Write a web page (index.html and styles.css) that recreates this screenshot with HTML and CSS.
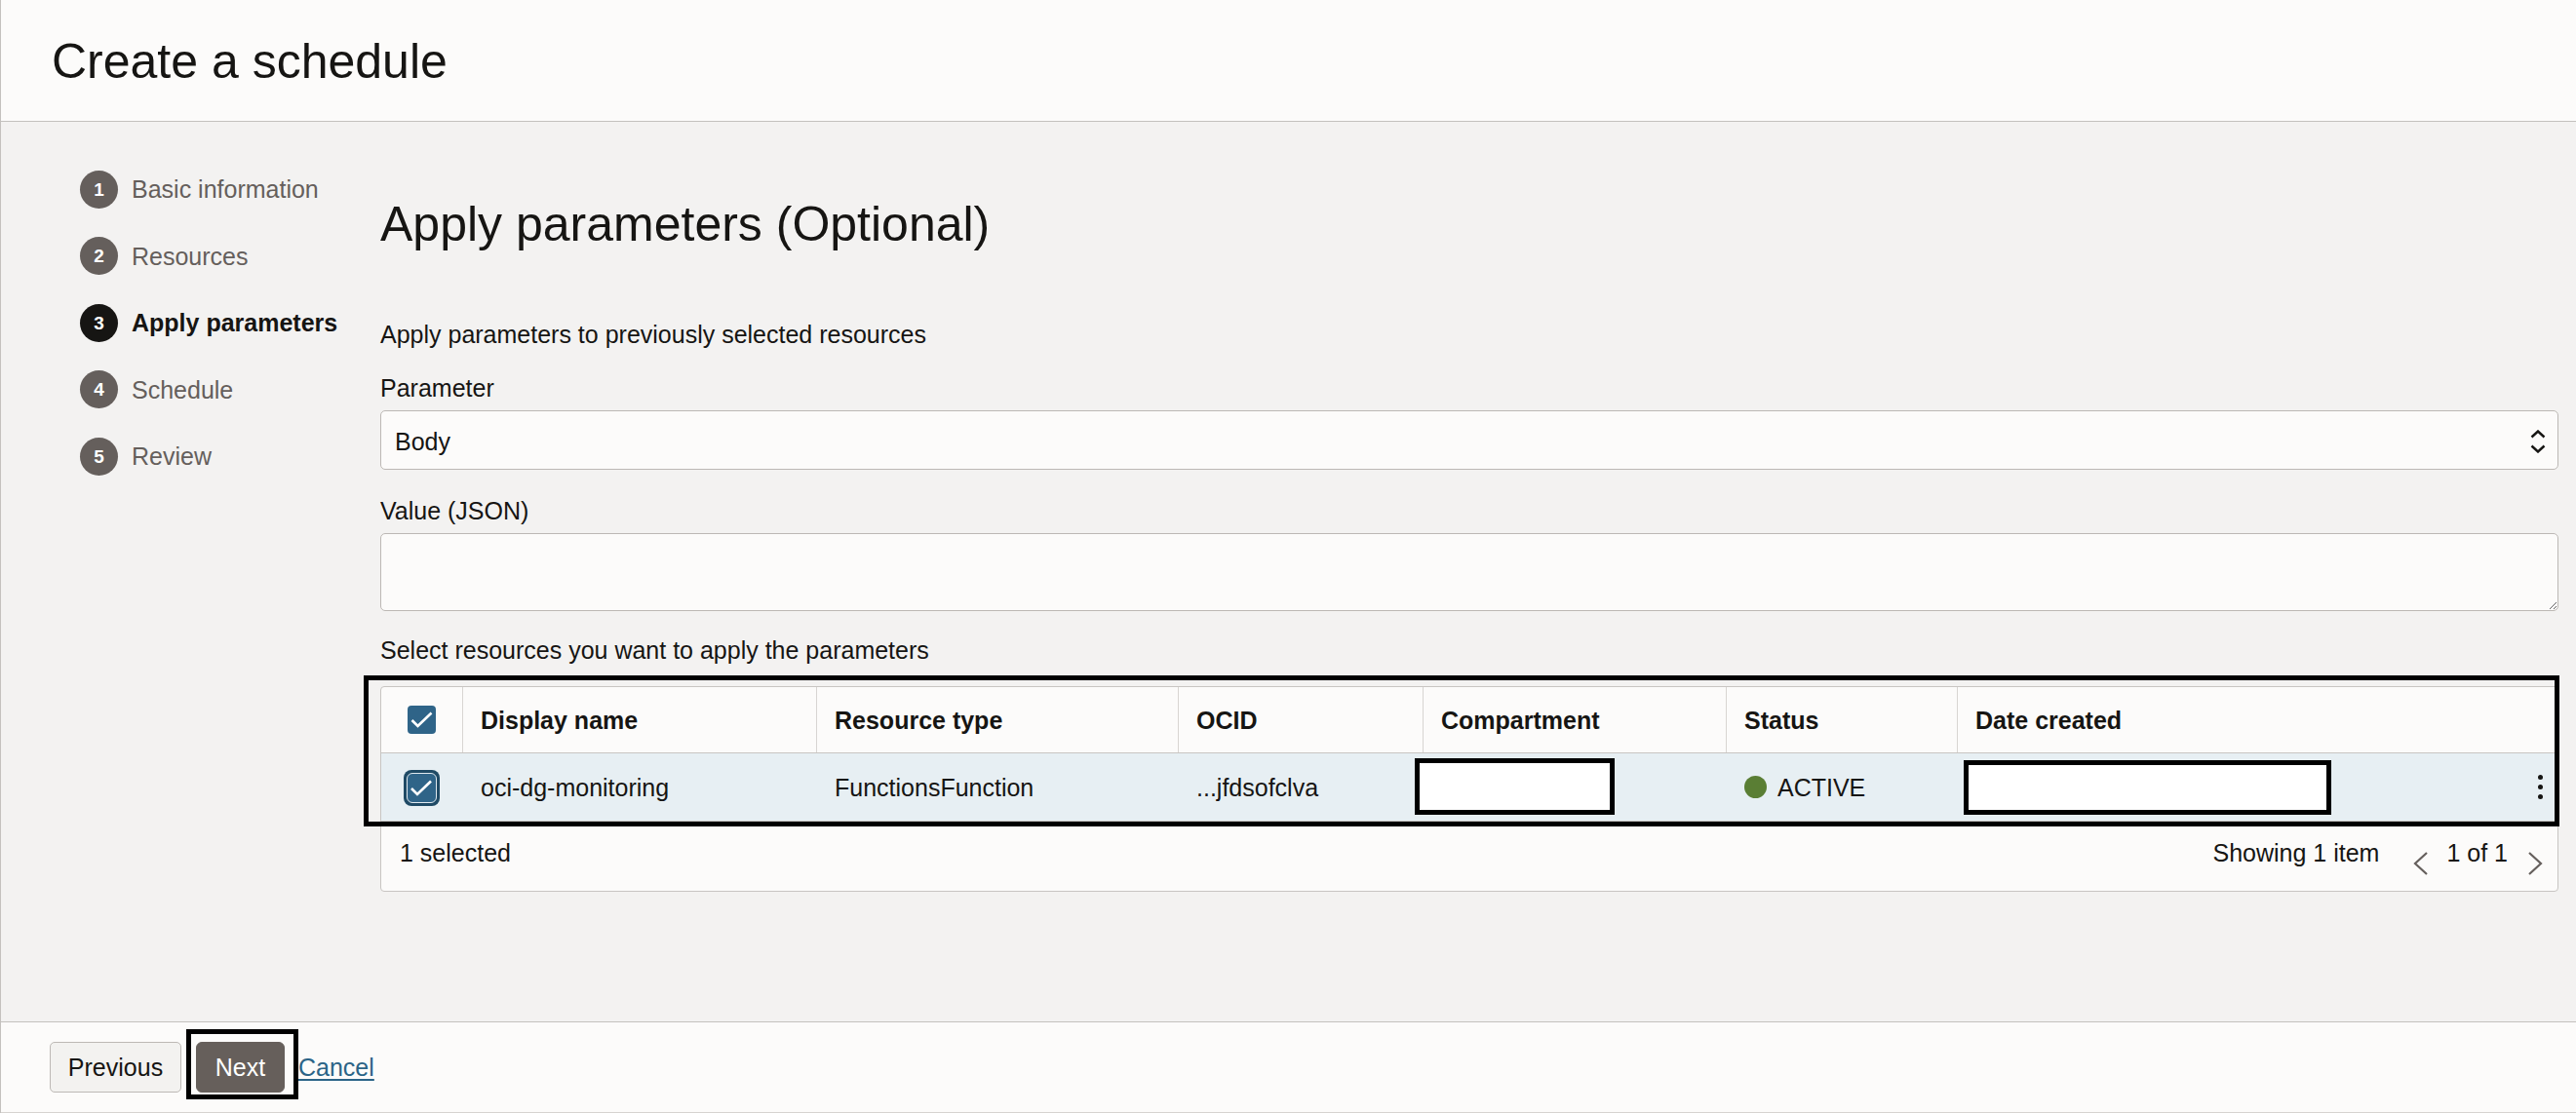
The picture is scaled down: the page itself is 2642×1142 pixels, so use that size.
FILE: index.html
```html
<!DOCTYPE html>
<html lang="en">
<head>
<meta charset="utf-8">
<title>Create a schedule</title>
<link rel="stylesheet" href="styles.css">
</head>
<body>
<div class="page">
  <header class="page-header">
    <h1 class="page-title">Create a schedule</h1>
  </header>
  <main class="wizard">
    <nav class="steps">
      <ol class="step-list">
        <li class="step"><span class="step-num">1</span><span class="step-label">Basic information</span></li>
        <li class="step"><span class="step-num">2</span><span class="step-label">Resources</span></li>
        <li class="step step-active"><span class="step-num">3</span><span class="step-label">Apply parameters</span></li>
        <li class="step"><span class="step-num">4</span><span class="step-label">Schedule</span></li>
        <li class="step"><span class="step-num">5</span><span class="step-label">Review</span></li>
      </ol>
    </nav>
    <section class="content">
      <h2 class="section-title">Apply parameters (Optional)</h2>
      <p class="intro">Apply parameters to previously selected resources</p>
      <div class="field">
        <label class="field-label">Parameter</label>
        <div class="select">
          <span class="select-value">Body</span>
          <svg class="select-arrows" width="16" height="24" viewBox="0 0 16 24"><polyline points="1.5,7.5 8,1.5 14.5,7.5" fill="none" stroke="#161513" stroke-width="2.4"/><polyline points="1.5,16.5 8,22.5 14.5,16.5" fill="none" stroke="#161513" stroke-width="2.4"/></svg>
        </div>
      </div>
      <div class="field field-next">
        <label class="field-label">Value (JSON)</label>
        <textarea class="textarea"></textarea>
      </div>
      <p class="table-label">Select resources you want to apply the parameters</p>
      <div class="table-card">
        <div class="annot annot-table"></div>
        <div class="trow thead">
          <div class="th th-check">
            <span class="cb">
              <svg width="29" height="29" viewBox="0 0 29 29"><polyline points="4.5,15 10.5,21 24.5,7.5" fill="none" stroke="#fff" stroke-width="2.6"/></svg>
            </span>
          </div>
          <div class="th">Display name</div>
          <div class="th">Resource type</div>
          <div class="th">OCID</div>
          <div class="th">Compartment</div>
          <div class="th">Status</div>
          <div class="th">Date created</div>
        </div>
        <div class="trow tr-selected">
          <div class="td td-check">
            <span class="cb-focus">
              <span class="cb cb-inner">
                <svg width="29" height="29" viewBox="0 0 29 29"><polyline points="4,15 10,21 24,7.5" fill="none" stroke="#fff" stroke-width="2.6"/></svg>
              </span>
            </span>
          </div>
          <div class="td">oci-dg-monitoring</div>
          <div class="td">FunctionsFunction</div>
          <div class="td">...jfdsofclva</div>
          <div class="td td-redacted"><span class="redact redact-comp"></span></div>
          <div class="td"><span class="status-dot"></span>ACTIVE</div>
          <div class="td td-last">
            <span class="redact redact-date"></span>
            <svg class="kebab" width="5" height="25" viewBox="0 0 5 25"><circle cx="2.5" cy="2.5" r="2.5" fill="#161513"/><circle cx="2.5" cy="12.5" r="2.5" fill="#161513"/><circle cx="2.5" cy="22.5" r="2.5" fill="#161513"/></svg>
          </div>
        </div>
        <div class="tfoot">
          <span class="selected-count">1 selected</span>
          <div class="pager">
            <span class="pager-info">Showing 1 item</span>
            <svg class="chev chev-left" width="18" height="24" viewBox="0 0 18 24"><polyline points="15,1 3,12 15,23" fill="none" stroke="#655f5c" stroke-width="2.2"/></svg>
            <span class="pager-page">1 of 1</span>
            <svg class="chev chev-right" width="16" height="24" viewBox="0 0 16 24"><polyline points="2,1 14,12 2,23" fill="none" stroke="#655f5c" stroke-width="2.2"/></svg>
          </div>
        </div>
      </div>
    </section>
  </main>
  <footer class="page-footer">
    <button class="btn btn-secondary" type="button">Previous</button>
    <span class="btn-wrap">
      <button class="btn btn-primary" type="button">Next</button>
      <span class="annot annot-next"></span>
    </span>
    <a class="link-cancel" href="#">Cancel</a>
  </footer>
</div>
</body>
</html>
```

FILE: styles.css
```css
* { box-sizing: border-box; }

html, body {
  margin: 0;
  padding: 0;
}

body {
  font-family: "Liberation Sans", Arial, sans-serif;
  font-size: 25px;
  line-height: 30px;
  color: #161513;
  background: #f3f2f1;
}

.page {
  display: flex;
  flex-direction: column;
  height: 1142px;
  border-left: 1px solid #c4c1be;
  overflow: hidden;
}

/* Header */
.page-header {
  height: 125px;
  flex: none;
  background: #fcfbfa;
  border-bottom: 1px solid #c4c1be;
  padding: 33px 0 0 52px;
}

.page-title {
  margin: 0;
  font-size: 50px;
  line-height: 60px;
  font-weight: 400;
}

/* Wizard body */
.wizard {
  flex: 1;
  display: flex;
  background: #f3f2f1;
}

.steps {
  width: 389px;
  flex: none;
  padding: 49.5px 0 0 81px;
}

.step-list {
  list-style: none;
  margin: 0;
  padding: 0;
  display: flex;
  flex-direction: column;
  gap: 29.5px;
}

.step {
  display: flex;
  align-items: center;
  gap: 14px;
  height: 39px;
}

.step-num {
  width: 39px;
  height: 39px;
  border-radius: 50%;
  background: #655f5c;
  color: #fff;
  font-size: 19px;
  font-weight: 700;
  display: flex;
  align-items: center;
  justify-content: center;
  padding-top: 1px;
}

.step-label {
  color: #655f5c;
  font-size: 25px;
  line-height: 30px;
}

.step-active .step-num { background: #161513; }
.step-active .step-label { color: #161513; font-weight: 700; }

/* Content */
.content {
  flex: 1;
  padding: 75px 18px 0 0;
  min-width: 0;
}

.section-title {
  margin: 0;
  font-size: 50px;
  line-height: 60px;
  font-weight: 400;
}

.intro {
  margin: 68px 0 0;
}

.field { margin-top: 25px; }
.field-next { margin-top: 27px; }

.field-label {
  display: block;
  margin-bottom: 8px;
}

.select {
  height: 61px;
  border: 1px solid #bcb8b4;
  border-radius: 5px;
  background: #fcfbfa;
  display: flex;
  align-items: center;
  justify-content: space-between;
  padding: 2px 12px 0 14px;
}

.select-arrows { display: block; }

.textarea {
  display: block;
  width: 100%;
  height: 80px;
  border: 1px solid #bcb8b4;
  border-radius: 5px;
  background: #fcfbfa;
  resize: vertical;
  font: inherit;
  margin: 0;
}

.table-label {
  margin: 25px 0 0;
}

/* Table */
.table-card {
  position: relative;
  margin-top: 22px;
  border: 1px solid #c8c5c2;
  border-radius: 4px;
  background: #fcfbfa;
}

.trow {
  display: grid;
  grid-template-columns: 83px 363px 371px 251px 311px 237px 1fr;
}

.thead {
  height: 68px;
  border-bottom: 1px solid #c8c5c2;
}

.th {
  display: flex;
  align-items: center;
  padding-left: 18px;
  border-left: 1px solid #d8d5d2;
  font-weight: 700;
}

.tr-selected {
  height: 70px;
  background: #e7eff3;
  border-bottom: 1px solid #c8c5c2;
}

.td {
  position: relative;
  display: flex;
  align-items: center;
  padding-left: 19px;
}

.trow .th-check,
.trow .td-check {
  border-left: none;
  padding-left: 0;
  justify-content: center;
}

.cb {
  width: 29px;
  height: 29px;
  border-radius: 4px;
  background: #2f6488;
  display: flex;
  align-items: center;
  justify-content: center;
}

.cb svg { display: block; flex: none; }

.cb-focus {
  width: 37px;
  height: 37px;
  border-radius: 8px;
  background: #1f4a65;
  padding: 3px;
  display: flex;
  margin-top: 2px;
}

.cb-inner {
  width: 31px;
  height: 31px;
  border-radius: 6px;
  border: 1px solid #dfe8ee;
}

.status-dot {
  width: 23px;
  height: 23px;
  border-radius: 50%;
  background: #5a7e34;
  margin-right: 11px;
  flex: none;
}

.td-last {
  justify-content: flex-end;
  padding-right: 15px;
}

.kebab { display: block; }

.redact {
  position: absolute;
  background: #fff;
  border: 5px solid #000;
}

.redact-comp {
  left: -8px;
  top: 5px;
  width: 205px;
  height: 58px;
}

.redact-date {
  left: 7px;
  top: 7px;
  width: 377px;
  height: 56px;
}

.tfoot {
  height: 71px;
  display: flex;
  justify-content: space-between;
  align-items: flex-start;
  padding: 17px 15px 0 19px;
}

.pager {
  display: flex;
  align-items: flex-start;
}

.pager-info { margin-right: 34px; }

.chev {
  display: block;
  margin-top: 14px;
}

.pager-page {
  margin: 0 20px 0 17px;
}

.annot {
  position: absolute;
  border: 5px solid #000;
  pointer-events: none;
}

.annot-table {
  left: -18px;
  top: -12px;
  width: 2252px;
  height: 155px;
  z-index: 2;
}

/* Footer */
.page-footer {
  height: 94px;
  flex: none;
  background: #fcfbfa;
  border-top: 1px solid #c4c1be;
  border-bottom: 1px solid #d6d3d0;
  padding: 20px 0 0 50px;
  display: flex;
  align-items: flex-start;
}

.btn {
  height: 52px;
  font-family: inherit;
  font-size: 25px;
  line-height: 30px;
  border-radius: 5px;
  padding: 0;
  margin: 0;
  text-align: center;
}

.btn-secondary {
  width: 135px;
  background: #f3f2f0;
  border: 1px solid #bdb9b5;
  color: #161513;
}

.btn-wrap {
  position: relative;
  display: block;
  margin-left: 15px;
}

.btn-primary {
  display: block;
  width: 91px;
  background: #665f5b;
  border: 1px solid #665f5b;
  border-radius: 6px;
  color: #fff;
}

.annot-next {
  left: -10px;
  top: -13px;
  width: 115px;
  height: 72px;
}

.link-cancel {
  margin-left: 14px;
  margin-top: 11px;
  color: #2b6487;
  text-decoration: underline;
  text-underline-offset: 3px;
}
```
